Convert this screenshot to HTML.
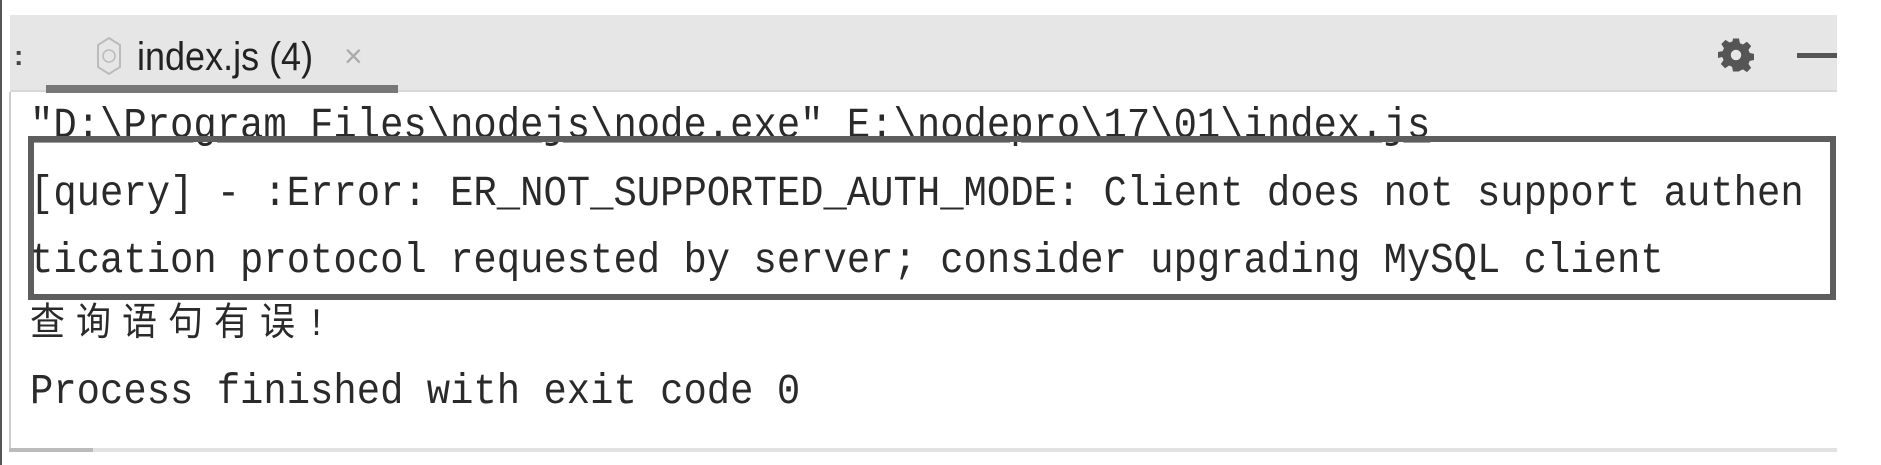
<!DOCTYPE html>
<html><head><meta charset="utf-8"><style>
html,body{margin:0;padding:0;background:#fff;}
body{width:1881px;height:465px;position:relative;overflow:hidden;}
.abs{position:absolute;}
.mono{font-family:"Liberation Mono","Noto Sans CJK SC",monospace;font-size:38.9px;color:#2a2a2a;white-space:pre;line-height:1;transform:scaleY(1.1);transform-origin:0 50%;}
</style></head><body>
<div class="abs" style="left:0;top:0;width:2px;height:465px;background:#555"></div>
<div class="abs" style="left:10px;top:15px;width:1827px;height:77px;background:#e6e6e6"></div>
<div class="abs" style="left:10px;top:90px;width:1827px;height:2px;background:#d8d8d8"></div>
<div class="abs" style="left:9px;top:92px;width:2px;height:356px;background:#ccc"></div>
<div class="abs" style="left:14px;top:40px;font:bold 28px 'Liberation Sans',sans-serif;color:#444">:</div>
<svg class="abs" style="left:96px;top:36px" width="26" height="40" viewBox="0 0 26 40"><polygon points="13,2 24,9 24,31 13,38 2,31 2,9" fill="none" stroke="#bbb" stroke-width="2"/><circle cx="13" cy="20" r="6" fill="none" stroke="#bbb" stroke-width="1.5"/></svg>
<div class="abs" style="left:137px;top:36px;font:36px 'Liberation Sans',sans-serif;color:#222;transform:scaleY(1.1)">index.js (4)</div>
<div class="abs" style="left:344px;top:38px;font:32px 'Liberation Sans',sans-serif;color:#aaa">×</div>
<div class="abs" style="left:46px;top:85px;width:352px;height:8px;background:#777"></div>
<svg class="abs" style="left:1718px;top:37px" width="36" height="36" viewBox="0 0 24 24"><path fill="#555" d="M10 1h4l.6 3.1 2 .9 2.7-1.8 2.8 2.8-1.8 2.7.9 2 3.1.6v4l-3.1.6-.9 2 1.8 2.7-2.8 2.8-2.7-1.8-2 .9L14 23h-4l-.6-3.1-2-.9-2.7 1.8-2.8-2.8 1.8-2.7-.9-2L0 14v-4l3.1-.6.9-2-1.8-2.7 2.8-2.8 2.7 1.8 2-.9z M12 8.5a3.5 3.5 0 1 0 0 7a3.5 3.5 0 1 0 0-7z" fill-rule="evenodd"/></svg>
<div class="abs" style="left:1797px;top:53px;width:40px;height:5px;background:#555"></div>
<div class="abs mono" style="left:30px;top:107px;text-decoration:underline;">"D:\Program Files\nodejs\node.exe" E:\nodepro\17\01\index.js</div>
<div class="abs" style="left:28px;top:136px;width:1796px;height:152px;border:6px solid #5e5e5e;"></div>
<div class="abs mono" style="left:30px;top:175px;">[query] - :Error: ER_NOT_SUPPORTED_AUTH_MODE: Client does not support authen</div>
<div class="abs mono" style="left:30px;top:242px;">tication protocol requested by server; consider upgrading MySQL client</div>
<div class="abs mono" style="left:30px;top:308px;font-size:35px;letter-spacing:11px;">查询语句有误!</div>
<div class="abs mono" style="left:30px;top:373px;">Process finished with exit code 0</div>
<div class="abs" style="left:9px;top:448px;width:1828px;height:4px;background:#e2e2e2"></div>
<div class="abs" style="left:9px;top:448px;width:84px;height:4px;background:#bbb"></div>
</body></html>
